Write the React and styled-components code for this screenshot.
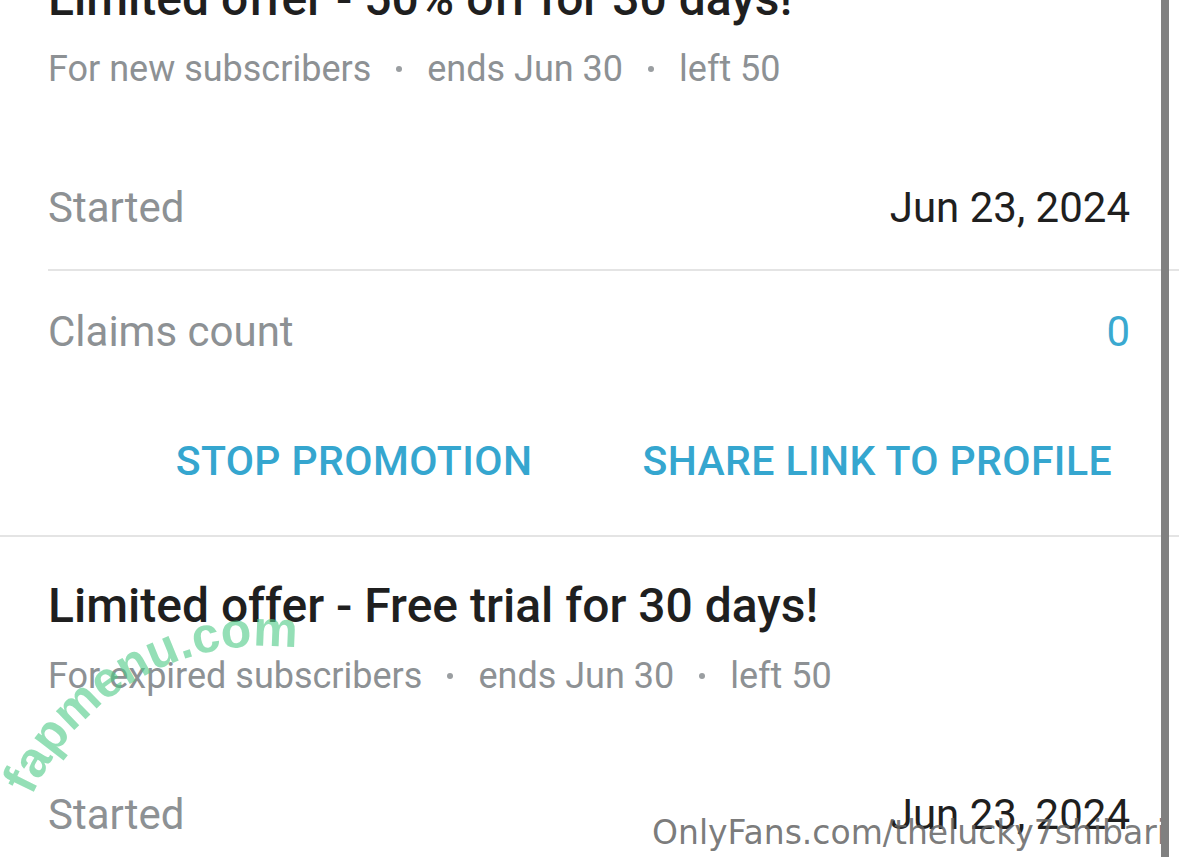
import React from 'react'
import styled, { createGlobalStyle } from 'styled-components'

const GlobalStyle = createGlobalStyle`
    html, body {
        margin: 0;
        padding: 0;
        background: #fff;
        overflow: hidden;
    }
    body {
        font-family: Roboto, "Noto Sans", sans-serif;
        -webkit-font-smoothing: antialiased;
    }
`;

const Screen = styled.div`
    position: relative;
    width: 1179px;
    height: 867px;
    overflow: hidden;
    background: #fff;
`;

const List = styled.div`
    display: flex;
    flex-direction: column;
    margin-top: -70px;
`;

const Card = styled.section`
    display: flex;
    flex-direction: column;
    padding-top: 41px;
    border-bottom: 2px solid #e4e4e4;
`;

const Header = styled.div`
    display: flex;
    flex-direction: column;
    gap: 18px;
    padding: 0 49px 0 48px;
`;

const Title = styled.h2`
    margin: 0;
    font-size: 48px;
    line-height: 56px;
    font-weight: 500;
    color: #1f1f1f;
    white-space: nowrap;
`;

const Meta = styled.div`
    display: flex;
    align-items: center;
    gap: 25px;
    font-size: 36px;
    line-height: 48px;
    color: #8d9194;
    white-space: nowrap;
`;

const Dot = styled.span`
    width: 6px;
    height: 6px;
    border-radius: 50%;
    background: #9a9ea1;
`;

const Rows = styled.div`
    display: flex;
    flex-direction: column;
    margin-top: 52px;
    padding-left: 48px;
`;

const Row = styled.div`
    display: flex;
    align-items: center;
    justify-content: space-between;
    height: ${p => p.$h}px;
    padding-right: 49px;
    border-bottom: ${p => (p.$divider ? '2px solid #e4e4e4' : 'none')};
`;

const Label = styled.span`
    font-size: 42px;
    color: #8d9194;
`;

const Value = styled.span`
    font-size: 42px;
    color: ${p => (p.$accent ? '#3aa9d0' : '#1f1f1f')};
`;

const Actions = styled.div`
    display: flex;
    justify-content: flex-end;
    gap: 110px;
    padding: 46px 67px 50px 0;
`;

const ActionButton = styled.button`
    border: none;
    background: none;
    padding: 0;
    font-family: Roboto, sans-serif;
    font-size: 41px;
    line-height: 48px;
    font-weight: 500;
    letter-spacing: 0.4px;
    color: #35a6cf;
    text-transform: uppercase;
    cursor: pointer;
`;

const Scrollbar = styled.div`
    position: absolute;
    top: 0;
    right: 10px;
    width: 8px;
    height: 857px;
    background: #808080;
    z-index: 3;
`;

const Watermark = styled.div`
    position: absolute;
    left: 652px;
    top: 812px;
    font-family: "DejaVu Sans", sans-serif;
    font-size: 33px;
    line-height: 42px;
    color: rgba(100, 100, 100, 0.85);
    white-space: nowrap;
    z-index: 2;
`;

const ArcMark = styled.svg`
    position: absolute;
    left: 0;
    top: 560px;
    z-index: 2;
    pointer-events: none;
`;

const promos = [
    {
        title: 'Limited offer - 50% off for 30 days!',
        audience: 'For new subscribers',
        ends: 'ends Jun 30',
        left: 'left 50',
        started: 'Jun 23, 2024',
        claims: 0,
    },
    {
        title: 'Limited offer - Free trial for 30 days!',
        audience: 'For expired subscribers',
        ends: 'ends Jun 30',
        left: 'left 50',
        started: 'Jun 23, 2024',
        claims: 0,
    },
];

function PromoCard({ promo }) {
    return (
        <Card>
            <Header>
                <Title>{promo.title}</Title>
                <Meta>
                    <span>{promo.audience}</span>
                    <Dot />
                    <span>{promo.ends}</span>
                    <Dot />
                    <span>{promo.left}</span>
                </Meta>
            </Header>
            <Rows>
                <Row $h={124} $divider>
                    <Label>Started</Label>
                    <Value>{promo.started}</Value>
                </Row>
                <Row $h={120}>
                    <Label>Claims count</Label>
                    <Value $accent>{promo.claims}</Value>
                </Row>
            </Rows>
            <Actions>
                <ActionButton>Stop promotion</ActionButton>
                <ActionButton>Share link to profile</ActionButton>
            </Actions>
        </Card>
    )
}

export default function App() {
    return (
        <Screen>
            <GlobalStyle />
            <List>
                {promos.map((p, i) => <PromoCard key={i} promo={p} />)}
            </List>
            <ArcMark width="340" height="260" viewBox="0 560 340 260">
                <defs>
                    <path id="arc" d="M 32 796 A 255 255 0 0 1 310 650" />
                </defs>
                <text
                    fontFamily="'Liberation Sans', Arial, sans-serif"
                    fontWeight="700"
                    fontSize="50"
                    fill="#4cc985"
                    fillOpacity="0.6"
                >
                    <textPath href="#arc">fapmenu.com</textPath>
                </text>
            </ArcMark>
            <Watermark>OnlyFans.com/thelucky7shibari</Watermark>
            <Scrollbar />
        </Screen>
    )
}
